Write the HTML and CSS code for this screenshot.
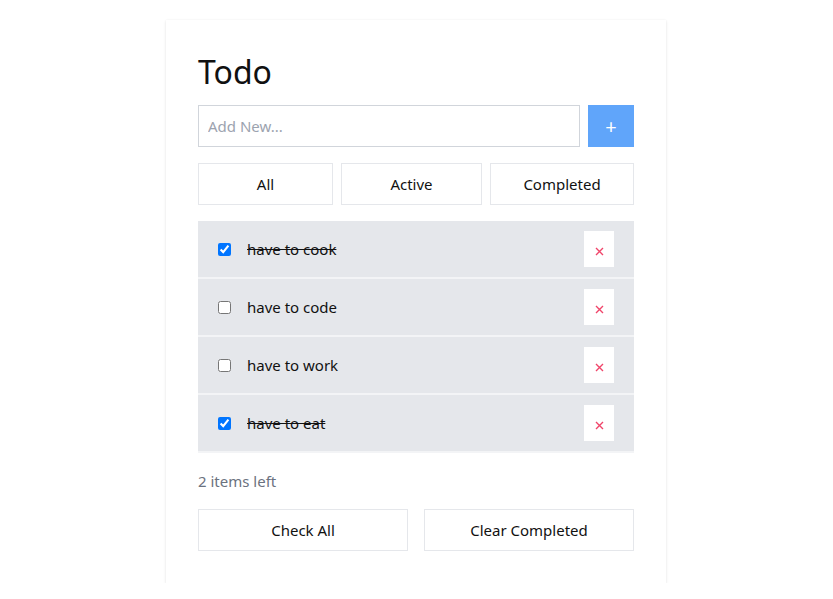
FILE: index.html
```html
<!DOCTYPE html>
<html lang="en">
<head>
<meta charset="utf-8">
<title>Todo</title>
<link rel="stylesheet" href="styles.css">
</head>
<body>
<div class="card">
  <h1 class="title">Todo</h1>
  <div class="add-row">
    <input class="add-input" type="text" placeholder="Add New...">
    <button class="add-btn">+</button>
  </div>
  <div class="filters">
    <button class="btn">All</button>
    <button class="btn">Active</button>
    <button class="btn">Completed</button>
  </div>
  <ul class="list">
    <li class="item">
      <input type="checkbox" class="check" checked>
      <span class="label done">have to cook</span>
      <button class="del"><svg width="9" height="9" viewBox="0 0 9 9"><path d="M1 1L8 8M8 1L1 8" stroke="#f0456a" stroke-width="1.4" fill="none"/></svg></button>
    </li>
    <li class="item">
      <input type="checkbox" class="check">
      <span class="label">have to code</span>
      <button class="del"><svg width="9" height="9" viewBox="0 0 9 9"><path d="M1 1L8 8M8 1L1 8" stroke="#f0456a" stroke-width="1.4" fill="none"/></svg></button>
    </li>
    <li class="item">
      <input type="checkbox" class="check">
      <span class="label">have to work</span>
      <button class="del"><svg width="9" height="9" viewBox="0 0 9 9"><path d="M1 1L8 8M8 1L1 8" stroke="#f0456a" stroke-width="1.4" fill="none"/></svg></button>
    </li>
    <li class="item">
      <input type="checkbox" class="check" checked>
      <span class="label done">have to eat</span>
      <button class="del"><svg width="9" height="9" viewBox="0 0 9 9"><path d="M1 1L8 8M8 1L1 8" stroke="#f0456a" stroke-width="1.4" fill="none"/></svg></button>
    </li>
  </ul>
  <p class="left">2 items left</p>
  <div class="actions">
    <button class="btn">Check All</button>
    <button class="btn">Clear Completed</button>
  </div>
</div>
</body>
</html>
```
FILE: styles.css
```css
* { box-sizing: border-box; }
html, body { margin: 0; padding: 0; background: #fff; }
body {
  font-family: "Noto Sans", "Open Sans", sans-serif;
  color: #111;
  padding: 20px 1px 0 0;
}
.card {
  width: 500px;
  margin: 0 auto;
  padding: 32px;
  background: #fff;
  box-shadow: 0 1px 3px rgba(0,0,0,0.1), 0 0 1px rgba(0,0,0,0.06);
}
.title {
  margin: 0 0 13px;
  font-size: 32px;
  font-weight: 400;
  line-height: 40px;
}
.add-row {
  display: flex;
  gap: 8px;
  margin-bottom: 16px;
}
.add-input {
  flex: 1;
  height: 42px;
  border: 1px solid #d1d5db;
  padding: 0 9px;
  font-family: inherit;
  font-size: 15px;
  outline: none;
}
.add-input::placeholder { color: #9ca3af; }
.add-btn {
  width: 46px;
  height: 42px;
  border: none;
  background: #60a5fa;
  color: #fff;
  font-family: inherit;
  font-size: 20px;
  line-height: 1;
  padding: 2px 0 0;
}
.btn {
  height: 42px;
  background: #fff;
  border: 1px solid #e5e7eb;
  font-family: inherit;
  font-size: 15px;
  color: #111;
  padding: 0;
}
.filters {
  display: grid;
  grid-template-columns: 135fr 141fr 144fr;
  gap: 8px;
  margin-bottom: 16px;
}
.list {
  list-style: none;
  margin: 0;
  padding: 0;
}
.item {
  display: flex;
  align-items: center;
  height: 58px;
  padding: 0 20px;
  background: #e5e7eb;
  border-bottom: 2px solid #f3f4f6;
}
.check {
  width: 13px;
  height: 13px;
  margin: 0 16px 0 0;
}
.label {
  flex: 1;
  font-size: 15px;
}
.done { text-decoration: line-through; }
.del {
  width: 30px;
  height: 36px;
  background: #fff;
  border: none;
  padding: 0;
  display: flex;
  align-items: center;
  justify-content: center;
}
.del svg { margin-top: 4px; }
.left {
  margin: 18px 0 18px;
  font-size: 15px;
  line-height: 20px;
  color: #6b7280;
}
.actions {
  display: grid;
  grid-template-columns: 1fr 1fr;
  gap: 16px;
}
```
